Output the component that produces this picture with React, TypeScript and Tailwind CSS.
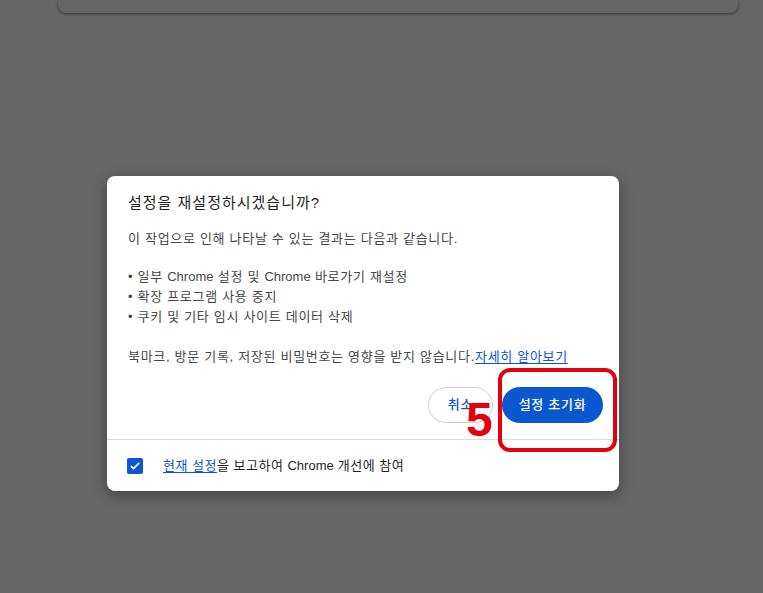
const KR = "font-['Liberation_Sans','Noto_Sans_CJK_KR',sans-serif]";

function Chrome() {
  return <span className="tracking-normal">Chrome</span>;
}

function CheckBox() {
  return (
    <span className="flex h-4 w-4 items-center justify-center rounded-[2px] bg-[#0b57d0]">
      <svg viewBox="0 0 16 16" className="h-3 w-3" fill="none">
        <path d="M3 8.5l3 3 7-7" stroke="white" strokeWidth="2" strokeLinecap="round" strokeLinejoin="round" />
      </svg>
    </span>
  );
}

export default function App() {
  return (
    <div className={`h-[593px] w-full overflow-hidden bg-[#666666] ${KR}`}>
      {/* page card behind the overlay */}
      <div className="ml-[58px] mr-[25px] h-[13px] rounded-b-[8px] bg-[#666666] shadow-[0_1px_3px_rgba(0,0,0,0.45)]" />

      <div className="ml-[107px] mt-[163px] w-[512px] rounded-[8px] bg-white shadow-[0_4px_14px_rgba(0,0,0,0.35)]">
        <div className="relative px-[21px] pb-4 pt-[17px]">
          <h2 className="text-[15px] leading-5 tracking-[1px] text-[#1f1f1f]">설정을 재설정하시겠습니까?</h2>
          <div className="text-[13px] leading-5 tracking-[0.7px] text-[#474747]">
            <p className="mt-4">이 작업으로 인해 나타날 수 있는 결과는 다음과 같습니다.</p>
            <ul className="mt-[18px]">
              <li>
                • 일부 <Chrome /> 설정 및 <Chrome /> 바로가기 재설정
              </li>
              <li>• 확장 프로그램 사용 중지</li>
              <li>• 쿠키 및 기타 임시 사이트 데이터 삭제</li>
            </ul>
            <p className="mt-5">
              북마크, 방문 기록, 저장된 비밀번호는 영향을 받지 않습니다.
              <a className="text-[#0b57d0] underline underline-offset-2">자세히 알아보기</a>
            </p>
          </div>
          <div className="mr-[-5px] mt-5 flex justify-end gap-[9px]">
            <button className="h-9 w-[65px] rounded-full border border-[#c7d0dc] text-[13px] font-medium tracking-[0.7px] text-[#0b57d0]">
              취소
            </button>
            <button className="h-9 w-[101px] rounded-full bg-[#0b57d0] text-[13px] font-medium tracking-[0.7px] text-white">
              설정 초기화
            </button>
          </div>

          {/* red annotation */}
          <div className="absolute right-[2px] top-[192px] h-[84px] w-[119px] rounded-[12px] border-4 border-[#e3000f]" />
          <span className="absolute left-[359px] top-[220px] font-['Liberation_Sans',sans-serif] text-[48px] font-bold leading-none text-[#e3000f]">
            5
          </span>
        </div>
        <div className="flex h-[52px] items-center gap-5 border-t border-[#dadce0] pl-5 text-[13px] tracking-[0.5px] text-[#1f1f1f]">
          <CheckBox />
          <span>
            <a className="text-[#0b57d0] underline underline-offset-2">현재 설정</a>을 보고하여 <Chrome /> 개선에 참여
          </span>
        </div>
      </div>
    </div>
  );
}
